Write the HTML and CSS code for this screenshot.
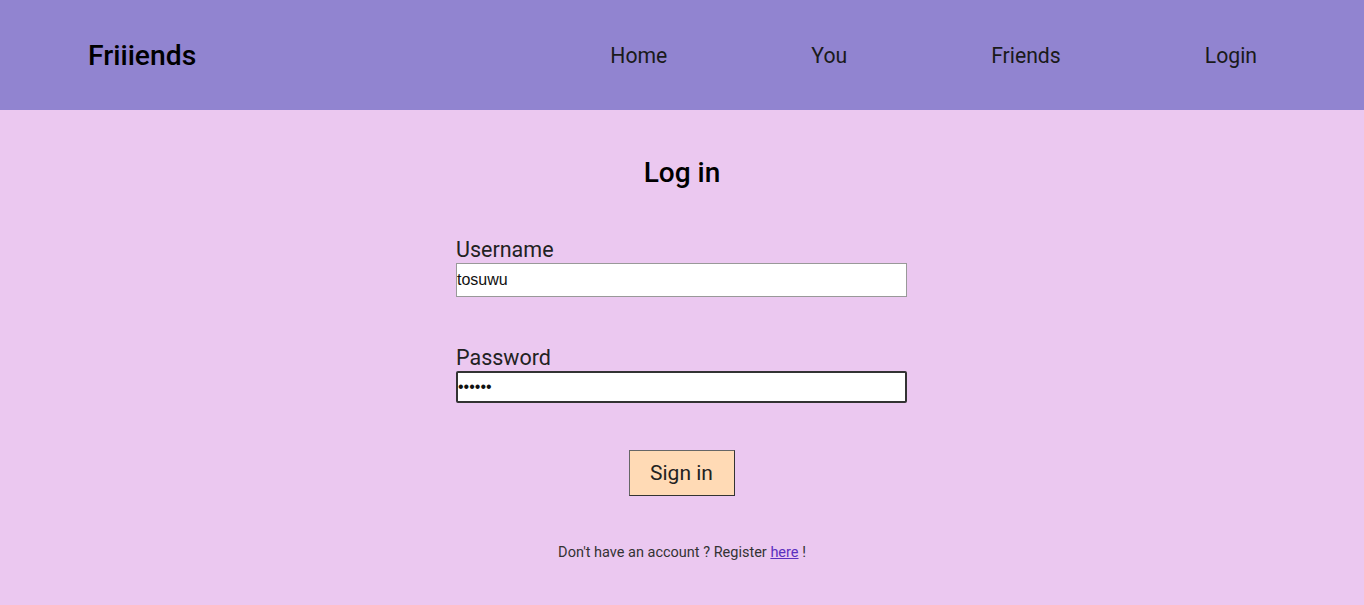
FILE: index.html
```html
<!DOCTYPE html>
<html lang="en">
<head>
<meta charset="utf-8">
<title>Friiiends - Log in</title>
<link rel="stylesheet" href="styles.css">
</head>
<body>
<header class="topbar">
  <div class="brand">Friiiends</div>
  <nav class="nav">
    <a class="nav-link" href="#">Home</a>
    <a class="nav-link" href="#">You</a>
    <a class="nav-link" href="#">Friends</a>
    <a class="nav-link" href="#">Login</a>
  </nav>
</header>
<main class="main">
  <h1 class="title">Log in</h1>
  <form class="form">
    <div class="field">
      <label class="label" for="username">Username</label>
      <input class="input" id="username" type="text" value="tosuwu">
    </div>
    <div class="field">
      <label class="label" for="password">Password</label>
      <input class="input input-focus" id="password" type="password" value="secret">
    </div>
    <div class="actions">
      <button class="btn" type="button">Sign in</button>
    </div>
  </form>
  <p class="note">Don't have an account ? Register <a class="note-link" href="#">here</a> !</p>
</main>
</body>
</html>
```
FILE: styles.css
```css
html, body {
  margin: 0;
  padding: 0;
}
body {
  background: #ebc8f0;
  font-family: Roboto, "Liberation Sans", sans-serif;
  color: #111;
  min-height: 605px;
}
.topbar {
  height: 110px;
  background: #9184d0;
  display: flex;
  align-items: center;
  padding: 0 107px 0 88px;
  box-sizing: border-box;
}
.brand {
  font-size: 28.3px;
  font-weight: 500;
  color: #000;
}
.nav {
  margin-left: auto;
  display: flex;
  gap: 144px;
}
.nav-link {
  font-size: 21.2px;
  color: #1a1a1a;
  text-decoration: none;
}
.main {
  display: flex;
  flex-direction: column;
  align-items: center;
}
.title {
  margin: 47px 0 0;
  font-size: 28px;
  font-weight: 500;
  line-height: 32px;
  color: #000;
}
.form {
  margin: 48px 1px 0 0;
  width: 451px;
  display: flex;
  flex-direction: column;
}
.field {
  display: flex;
  flex-direction: column;
  margin-bottom: 48px;
}
.field + .field {
  margin-bottom: 47px;
}
.label {
  font-size: 21.5px;
  line-height: 26px;
  color: #222;
}
.input {
  box-sizing: border-box;
  width: 451px;
  height: 34px;
  margin: 0;
  padding: 0;
  border: 1px solid #999;
  background: #fff;
  font-family: "Liberation Sans", Arial, sans-serif;
  font-size: 16px;
  color: #111;
  outline: none;
}
.input-focus {
  height: 32px;
  border: 2px solid #333;
  border-radius: 2px;
}
.actions {
  display: flex;
  justify-content: center;
}
.btn {
  width: 106px;
  height: 46px;
  background: #ffdab5;
  border: 1px solid #333;
  border-left-color: #666;
  border-top-color: #666;
  font-family: Roboto, "Liberation Sans", sans-serif;
  font-size: 21px;
  color: #222;
  padding: 0;
}
.note {
  margin: 48px 0 0;
  font-size: 14.5px;
  color: #333;
}
.note-link {
  color: #5b2fbf;
}
```
